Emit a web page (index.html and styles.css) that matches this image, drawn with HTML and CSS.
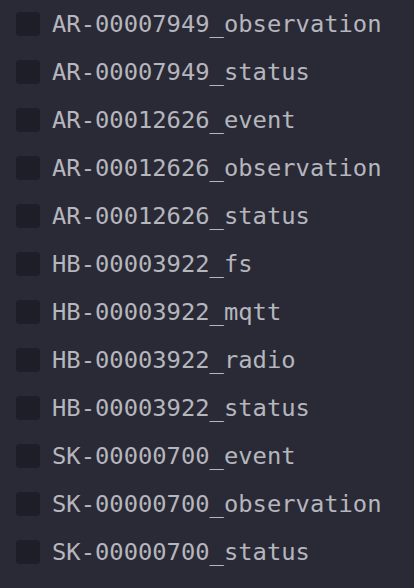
FILE: index.html
```html
<!DOCTYPE html>
<html>
<head>
<meta charset="utf-8">
<link rel="stylesheet" href="styles.css">
</head>
<body>
<ul class="list">
  <li class="item"><span class="box"></span><span class="label">AR-00007949_observation</span></li>
  <li class="item"><span class="box"></span><span class="label">AR-00007949_status</span></li>
  <li class="item"><span class="box"></span><span class="label">AR-00012626_event</span></li>
  <li class="item"><span class="box"></span><span class="label">AR-00012626_observation</span></li>
  <li class="item"><span class="box"></span><span class="label">AR-00012626_status</span></li>
  <li class="item"><span class="box"></span><span class="label">HB-00003922_fs</span></li>
  <li class="item"><span class="box"></span><span class="label">HB-00003922_mqtt</span></li>
  <li class="item"><span class="box"></span><span class="label">HB-00003922_radio</span></li>
  <li class="item"><span class="box"></span><span class="label">HB-00003922_status</span></li>
  <li class="item"><span class="box"></span><span class="label">SK-00000700_event</span></li>
  <li class="item"><span class="box"></span><span class="label">SK-00000700_observation</span></li>
  <li class="item"><span class="box"></span><span class="label">SK-00000700_status</span></li>
</ul>
</body>
</html>
```
FILE: styles.css
```css
html, body {
  margin: 0;
  padding: 0;
  background: #292a35;
  height: 100%;
}
.list {
  list-style: none;
  margin: 0;
  padding: 0 0 0 16px;
}
.item {
  display: flex;
  align-items: center;
  gap: 12px;
  height: 48px;
}
.box {
  width: 24px;
  height: 24px;
  border-radius: 4px;
  background: #1e1e28;
  flex: none;
}
.label {
  font-family: "DejaVu Sans Mono", monospace;
  font-size: 23.8px;
  color: #b6b6be;
  white-space: nowrap;
}
```
